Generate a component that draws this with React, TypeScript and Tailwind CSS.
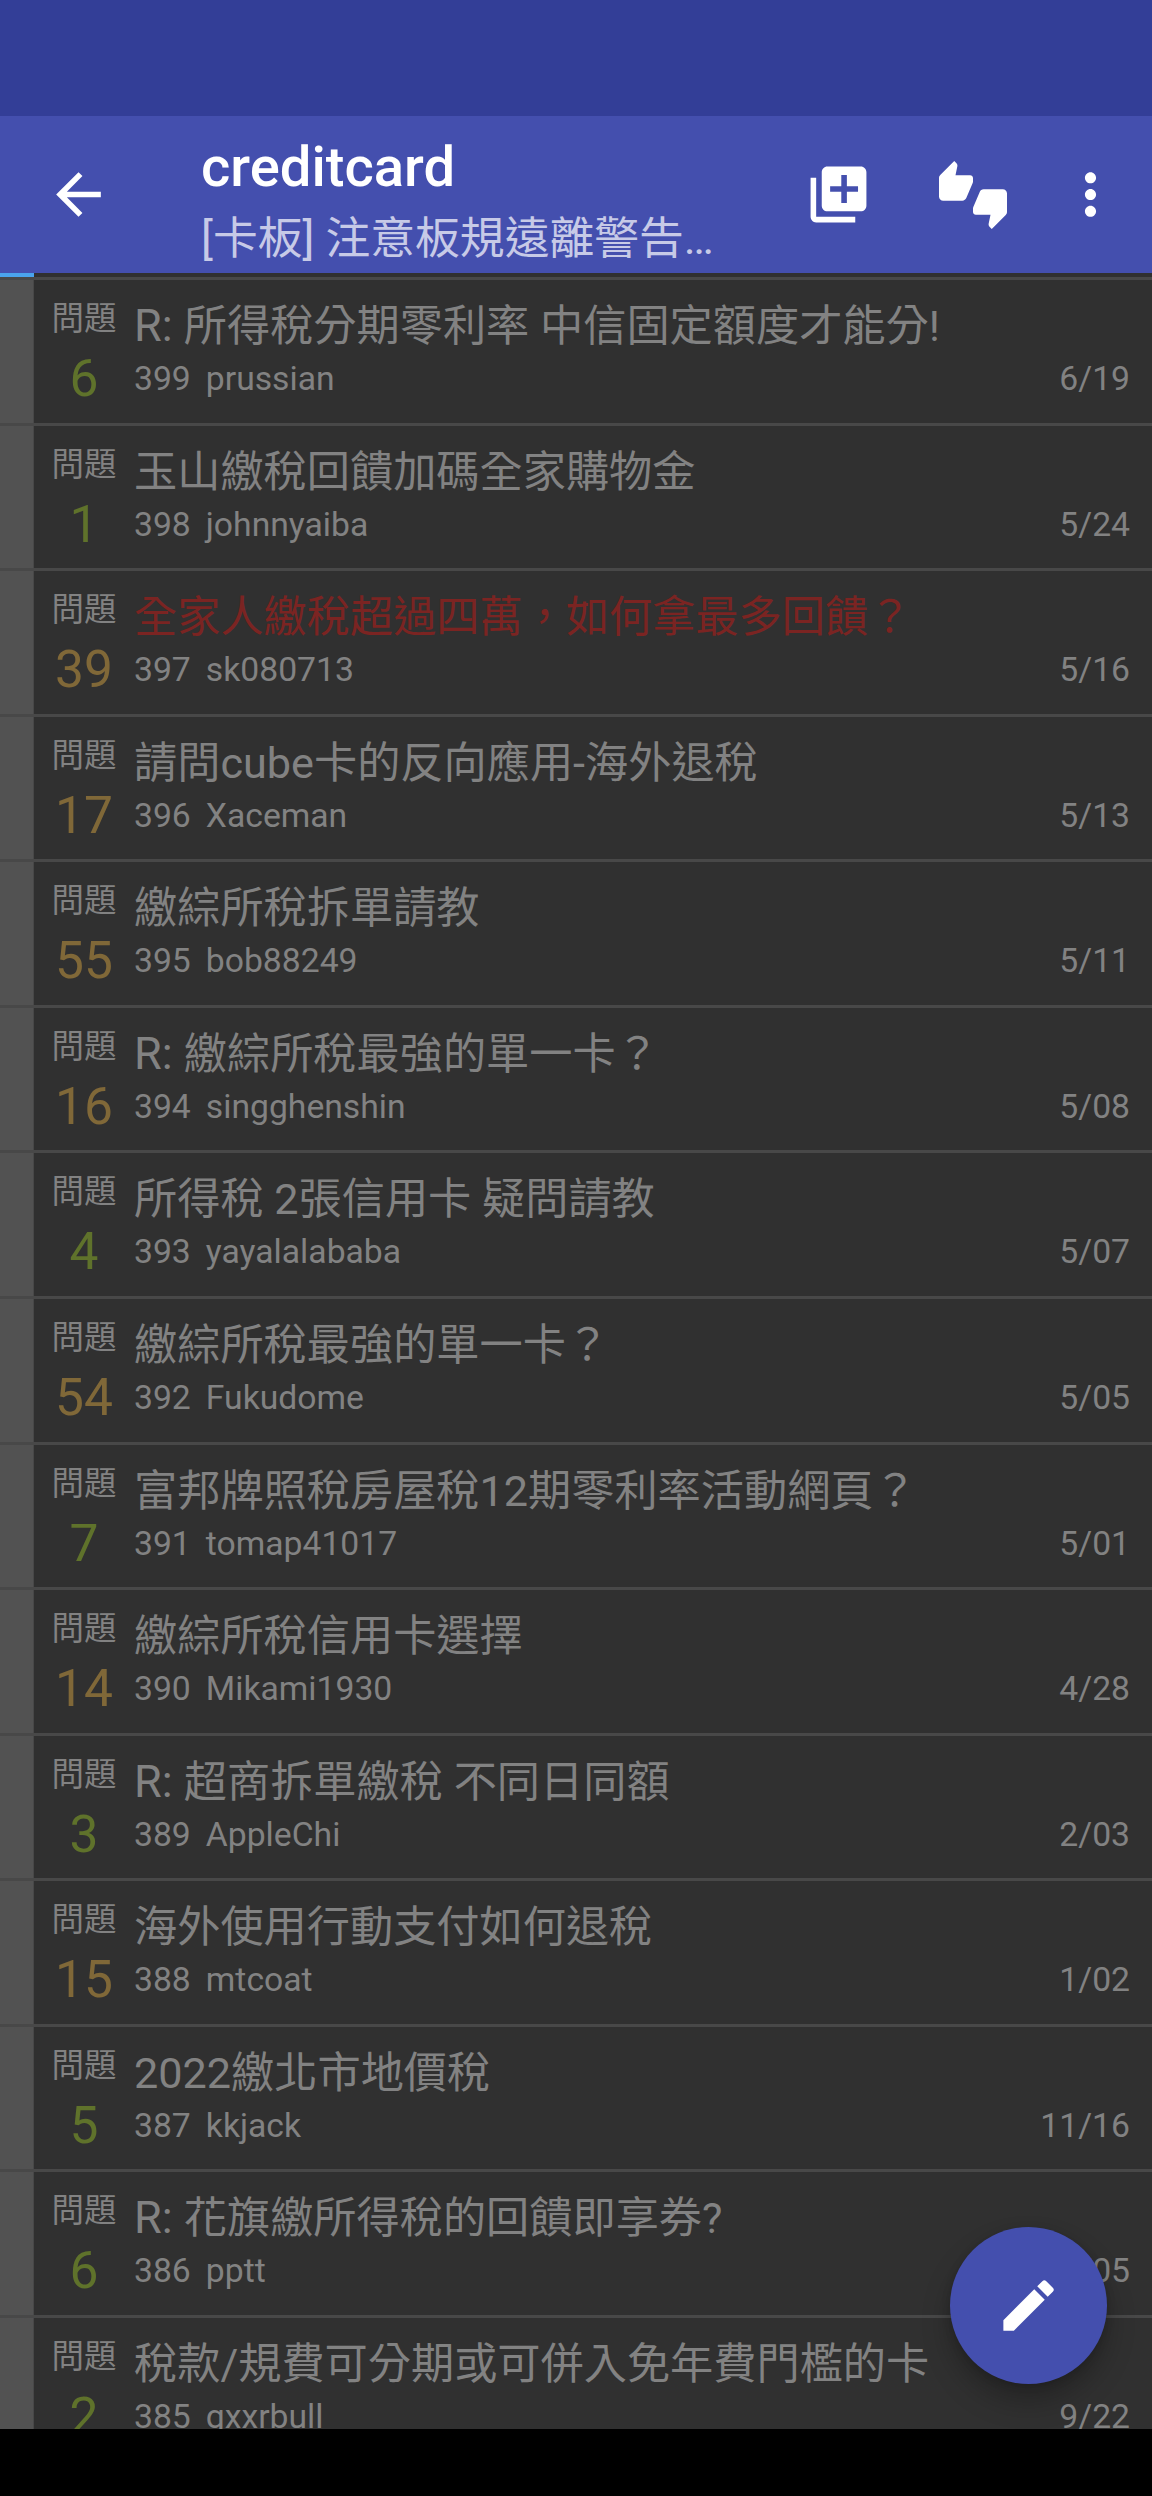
import React from "react";
import {
  MdArrowBack,
  MdEdit,
  MdLibraryAdd,
  MdMoreVert,
  MdThumbsUpDown,
} from "react-icons/md";

type Article = {
  id: number;
  title: string;
  author: string;
  date: string;
  pushes: number;
  reply?: boolean;
  deleted?: boolean;
};

const articles: Article[] = [
  { id: 399, title: "所得稅分期零利率 中信固定額度才能分!", author: "prussian", date: "6/19", pushes: 6, reply: true },
  { id: 398, title: "玉山繳稅回饋加碼全家購物金", author: "johnnyaiba", date: "5/24", pushes: 1 },
  { id: 397, title: "全家人繳稅超過四萬，如何拿最多回饋？", author: "sk080713", date: "5/16", pushes: 39, deleted: true },
  { id: 396, title: "請問cube卡的反向應用-海外退稅", author: "Xaceman", date: "5/13", pushes: 17 },
  { id: 395, title: "繳綜所稅拆單請教", author: "bob88249", date: "5/11", pushes: 55 },
  { id: 394, title: "繳綜所稅最強的單一卡？", author: "singghenshin", date: "5/08", pushes: 16, reply: true },
  { id: 393, title: "所得稅 2張信用卡 疑問請教", author: "yayalalababa", date: "5/07", pushes: 4 },
  { id: 392, title: "繳綜所稅最強的單一卡？", author: "Fukudome", date: "5/05", pushes: 54 },
  { id: 391, title: "富邦牌照稅房屋稅12期零利率活動網頁？", author: "tomap41017", date: "5/01", pushes: 7 },
  { id: 390, title: "繳綜所稅信用卡選擇", author: "Mikami1930", date: "4/28", pushes: 14 },
  { id: 389, title: "超商拆單繳稅 不同日同額", author: "AppleChi", date: "2/03", pushes: 3, reply: true },
  { id: 388, title: "海外使用行動支付如何退稅", author: "mtcoat", date: "1/02", pushes: 15 },
  { id: 387, title: "2022繳北市地價稅", author: "kkjack", date: "11/16", pushes: 5 },
  { id: 386, title: "花旗繳所得稅的回饋即享券?", author: "pptt", date: "9/05", pushes: 6, reply: true },
  { id: 385, title: "稅款/規費可分期或可併入免年費門檻的卡", author: "gxxrbull", date: "9/22", pushes: 2 },
];

const Toolbar = () => (
  <header className="flex h-[157px] shrink-0 items-center bg-[#444fae] pr-[28px] pl-[45px] text-white">
    <button aria-label="Back">
      <MdArrowBack className="size-[67px]" />
    </button>
    <div className="ml-[89px] w-[540px] pt-4">
      <h1 className="text-[56.2px] leading-[66px] font-medium">creditcard</h1>
      <p className="mt-1.5 text-[44.8px] leading-[66px] whitespace-nowrap text-[#c7cae7]">
        [卡板] 注意板規遠離警告…
      </p>
    </div>
    <div className="ml-auto flex items-center">
      <button aria-label="Add to favorites">
        <MdLibraryAdd className="size-[67px]" />
      </button>
      <button aria-label="Pushes" className="ml-[67px]">
        <MdThumbsUpDown className="size-[68px]" />
      </button>
      <button aria-label="More" className="ml-[50px]">
        <MdMoreVert className="size-[67px]" />
      </button>
    </div>
  </header>
);

const ArticleRow = ({ article }: { article: Article }) => (
  <li className="flex h-[145.57px] shrink-0 border-t-[3px] border-[#484848] text-[#828282]">
    <div className="w-[34px] shrink-0 border-r border-[#484848] bg-[#525252]" />
    <div className="flex w-[100px] shrink-0 flex-col items-center pt-[19px]">
      <span className="text-[32.5px] leading-10">問題</span>
      <span
        className={`mt-3 text-[51.5px] leading-[56px] ${
          article.pushes >= 10 ? "text-[#806838]" : "text-[#5f722b]"
        }`}
      >
        {article.pushes}
      </span>
    </div>
    <div className="min-w-0 flex-1 pt-[21px] pr-[22px]">
      <h2
        className={`h-[52px] text-[43.2px] leading-[52px] whitespace-nowrap ${
          article.deleted ? "text-[#7b2422]" : ""
        }`}
      >
        {article.reply && <span className="text-[45px] leading-none">R: </span>}
        {article.title}
      </h2>
      <div className="mt-1.5 flex text-[33.7px] leading-10">
        <span>{article.id}</span>
        <span className="ml-[15px]">{article.author}</span>
        <span className="ml-auto">{article.date}</span>
      </div>
    </div>
  </li>
);

export default function App() {
  return (
    <div className="relative flex h-[2496px] w-[1152px] flex-col overflow-hidden bg-black font-[Roboto,'Noto_Sans_CJK_TC',sans-serif]">
      {/* Status bar */}
      <div className="h-[116px] shrink-0 bg-[#333e97]" />
      <Toolbar />

      <main className="h-[2156px] shrink-0 overflow-hidden bg-[#303030]">
        {/* Loading progress */}
        <div className="h-1">
          <div className="h-full w-[34px] bg-[#4aa3ec]" />
        </div>
        <ul className="flex flex-col">
          {articles.map((article) => (
            <ArticleRow key={article.id} article={article} />
          ))}
        </ul>
      </main>

      {/* Compose button */}
      <button
        aria-label="New post"
        className="absolute right-[45px] bottom-[112px] flex size-[157px] items-center justify-center rounded-full bg-[#444fae] text-white shadow-[0_17px_28px_rgba(0,0,0,0.25),0_2px_8px_rgba(0,0,0,0.15)]"
      >
        <MdEdit className="size-[67px]" />
      </button>
      {/* Navigation bar covers the button's shadow */}
      <div className="absolute inset-x-0 bottom-0 h-[67px] bg-black" />
    </div>
  );
}
